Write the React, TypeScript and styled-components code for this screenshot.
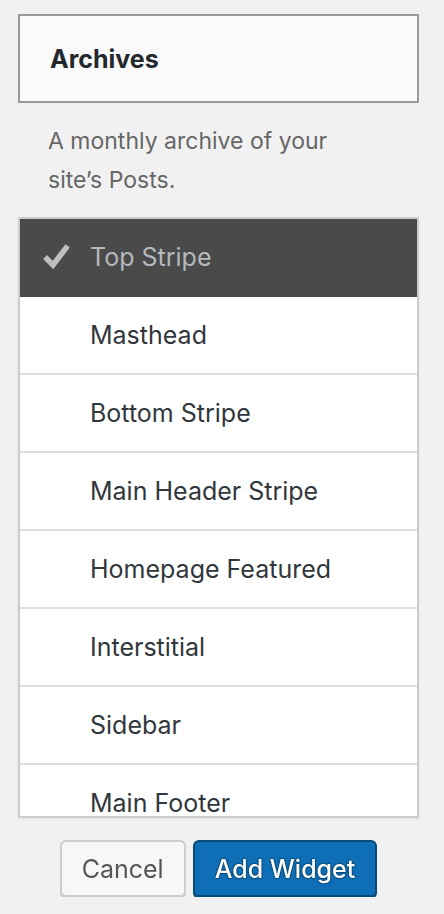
import React from "react";
import styled, { createGlobalStyle } from "styled-components";

const GlobalStyle = createGlobalStyle`
    html, body {
        margin: 0;
        padding: 0;
        background: #f1f1f1;
        font-family: Inter, "Open Sans", "Liberation Sans", sans-serif;
    }
`;

const Page = styled.div`
    width: 401px;
    padding: 14px 0 0 18px;
    display: flex;
    flex-direction: column;
`;

const WidgetHeader = styled.div`
    height: 85px;
    box-sizing: content-box;
    border: 2px solid #999;
    background: #fafafa;
    display: flex;
    align-items: center;
    padding-left: 30px;
`;

const WidgetTitle = styled.h3`
    margin: 0;
    font-size: 25px;
    font-weight: 700;
    color: #23282d;
`;

const Description = styled.p`
    margin: 0;
    padding: 19px 50px 17px 30px;
    font-size: 23px;
    line-height: 39px;
    color: #666;
`;

const AreaList = styled.ul`
    list-style: none;
    margin: 0;
    padding: 0;
    height: 597px;
    border: 2px solid #ccc;
    background: #fff;
    box-shadow: 0 1px 2px rgba(0, 0, 0, 0.07);
    overflow-y: auto;
    scrollbar-width: none;
    &::-webkit-scrollbar {
        display: none;
    }
`;

const AreaItem = styled.li<{ $selected?: boolean }>`
    height: 76px;
    display: flex;
    align-items: center;
    border-bottom: 2px solid ${p => (p.$selected ? "#4a4a4a" : "#ddd")};
    background: ${p => (p.$selected ? "#4a4a4a" : "#fff")};
    color: ${p => (p.$selected ? "#b4b9be" : "#32373c")};
    font-size: 25px;
`;

const CheckSlot = styled.span`
    width: 70px;
    display: flex;
    justify-content: flex-end;
`;

const CheckMark = styled.svg`
    width: 28px;
    height: 28px;
    margin-right: 19px;
`;

const Actions = styled.div`
    display: flex;
    justify-content: center;
    gap: 7px;
    padding-top: 22px;
`;

const Button = styled.button<{ $primary?: boolean }>`
    height: 57px;
    padding: 0 20px;
    border-radius: 6px;
    font-family: inherit;
    font-size: 25px;
    font-weight: ${p => (p.$primary ? 500 : 400)};
    cursor: pointer;
    border: 2px solid ${p => (p.$primary ? "#0a4b78" : "#ccc")};
    background: ${p => (p.$primary ? "#0e6fb6" : "#f7f7f7")};
    color: ${p => (p.$primary ? "#fff" : "#555")};
    box-shadow: ${p => (p.$primary ? "0 2px 0 #0a4b78" : "0 2px 0 #ccc")};
    text-shadow: ${p =>
        p.$primary ? "0 -1px 1px #0a4b78, 1px 0 1px #0a4b78, 0 1px 1px #0a4b78, -1px 0 1px #0a4b78" : "none"};
`;

const areas = [
    "Top Stripe",
    "Masthead",
    "Bottom Stripe",
    "Main Header Stripe",
    "Homepage Featured",
    "Interstitial",
    "Sidebar",
    "Main Footer",
];

export default function App() {
    return (
        <>
            <GlobalStyle />
            <Page>
                <WidgetHeader>
                    <WidgetTitle>Archives</WidgetTitle>
                </WidgetHeader>
                <Description>A monthly archive of your site’s Posts.</Description>
                <AreaList>
                    {areas.map((name, i) => (
                        <AreaItem key={name} $selected={i === 0}>
                            <CheckSlot>
                                {i === 0 && (
                                    <CheckMark viewBox="0 0 28 28">
                                        <polyline
                                            points="4,16 10,22 23,5"
                                            fill="none"
                                            stroke="#bfbfbf"
                                            strokeWidth="5.5"
                                            strokeLinecap="square"
                                            strokeLinejoin="miter"
                                        />
                                    </CheckMark>
                                )}
                            </CheckSlot>
                            {name}
                        </AreaItem>
                    ))}
                </AreaList>
                <Actions>
                    <Button>Cancel</Button>
                    <Button $primary>Add Widget</Button>
                </Actions>
            </Page>
        </>
    );
}
